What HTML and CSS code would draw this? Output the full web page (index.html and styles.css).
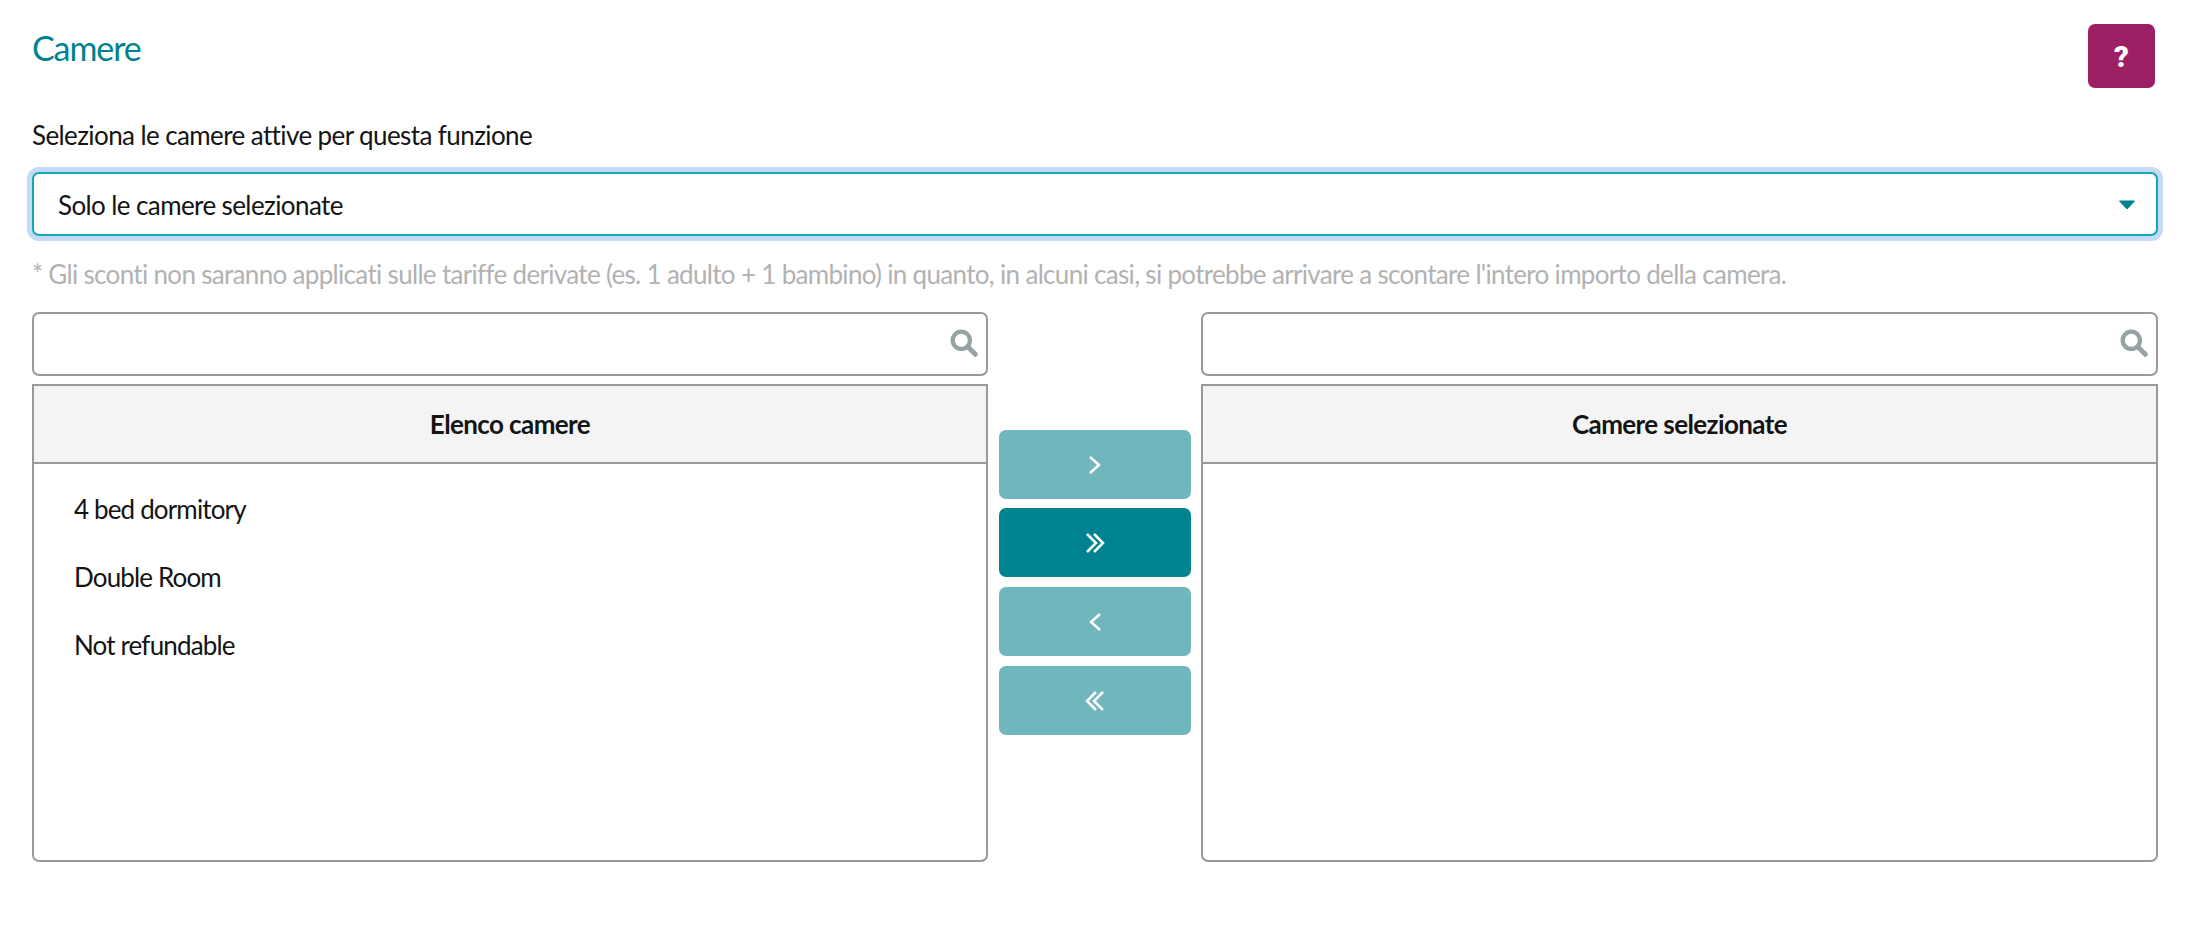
FILE: index.html
```html
<!DOCTYPE html>
<html lang="it">
<head>
<meta charset="utf-8">
<title>Camere</title>
<link rel="stylesheet" href="styles.css">
</head>
<body>
<main class="page">
  <header class="top">
    <h1 class="title">Camere</h1>
    <button class="help" type="button">?</button>
  </header>
  <label class="label">Seleziona le camere attive per questa funzione</label>
  <div class="select">
    <span>Solo le camere selezionate</span>
    <svg class="caret" width="18" height="10" viewBox="0 0 18 10"><path d="M1.500 1h15L9 9z" fill="#008391" stroke="#008391" stroke-linejoin="round"/></svg>
  </div>
  <p class="hint">* Gli sconti non saranno applicati sulle tariffe derivate (es. 1 adulto + 1 bambino) in quanto, in alcuni casi, si potrebbe arrivare a scontare l'intero importo della camera.</p>
  <div class="picker">
    <section class="col">
      <div class="search">
        <input class="search-input" type="text">
        <svg class="search-icon" width="28" height="28" viewBox="0 0 26 26"><circle cx="10.500" cy="10.500" r="8" fill="none" stroke="#95a3a4" stroke-width="4"/><path d="M16.500 16.500l7 7" stroke="#95a3a4" stroke-width="4.500" stroke-linecap="round"/></svg>
      </div>
      <div class="panel">
        <div class="panel-head">Elenco camere</div>
        <ul class="list">
          <li>4 bed dormitory</li>
          <li>Double Room</li>
          <li>Not refundable</li>
        </ul>
      </div>
    </section>
    <div class="actions">
      <button class="move" type="button"><svg width="24" height="24" viewBox="0 0 24 24"><path d="M7 4l9 8-9 8"/></svg></button>
      <button class="move active" type="button"><svg width="24" height="24" viewBox="0 0 24 24"><path d="M4 3l9 9-9 9M11 3l9 9-9 9"/></svg></button>
      <button class="move" type="button"><svg width="24" height="24" viewBox="0 0 24 24"><path d="M17 4l-9 8 9 8"/></svg></button>
      <button class="move" type="button"><svg width="24" height="24" viewBox="0 0 24 24"><path d="M20 3l-9 9 9 9M13 3l-9 9 9 9"/></svg></button>
    </div>
    <section class="col">
      <div class="search">
        <input class="search-input" type="text">
        <svg class="search-icon" width="28" height="28" viewBox="0 0 26 26"><circle cx="10.500" cy="10.500" r="8" fill="none" stroke="#95a3a4" stroke-width="4"/><path d="M16.500 16.500l7 7" stroke="#95a3a4" stroke-width="4.500" stroke-linecap="round"/></svg>
      </div>
      <div class="panel">
        <div class="panel-head">Camere selezionate</div>
        <ul class="list"></ul>
      </div>
    </section>
  </div>
</main>
</body>
</html>
```
FILE: styles.css
```css
* { box-sizing: border-box; }
html, body { margin: 0; background: #fff; }
body {
  font-family: "Lato", "Roboto", sans-serif;
  font-size: 26px;
  letter-spacing: -0.6px;
  color: #141414;
}
.page { padding: 24px 34px 0 32px; }
.top { display: flex; justify-content: space-between; align-items: flex-start; height: 88px; }
.title { margin: 4px 0 0; font-size: 34px; line-height: 40px; font-weight: 400; letter-spacing: -1.1px; color: #00838f; }
.help {
  width: 67px; height: 64px; margin-right: 3px; padding: 2px 0 0; border: 0; border-radius: 7px;
  background: #9c2063; color: #fff; font: 900 29px "Roboto", sans-serif;
}
.label { display: block; margin-top: 8px; margin-bottom: 22px; line-height: 30px; }
.select {
  display: flex; align-items: center; justify-content: space-between;
  height: 64px; padding: 2px 20px 0 24px;
  border: 2px solid #16a7b5; border-radius: 7px; background: #fff;
  box-shadow: 0 0 0 5px #c5daf5;
}
.hint { margin: 23px 0 0; line-height: 30px; letter-spacing: -0.68px; color: #b2b2b2; }
.picker { display: grid; grid-template-columns: 956px 213px 957px; margin-top: 23px; }
.col { display: flex; flex-direction: column; gap: 8px; }
.search { position: relative; }
.search-input {
  display: block; width: 100%; height: 64px; border: 2px solid #999; border-radius: 7px;
  background: #fff;
}
.search-icon { position: absolute; right: 10px; top: 17px; }
.panel { height: 478px; border: 2px solid #999; border-radius: 0 0 7px 7px; }
.panel-head {
  height: 78px; display: flex; align-items: center; justify-content: center;
  background: #f4f4f4; border-bottom: 2px solid #999; font-weight: 700;
}
.list { list-style: none; margin: 11px 0 0; padding: 0 0 0 40px; letter-spacing: -0.85px; }
.list li { height: 68px; line-height: 68px; }
.actions { display: flex; flex-direction: column; align-items: center; gap: 10px; padding-top: 118px; }
.move {
  display: flex; align-items: center; justify-content: center;
  width: 192px; height: 69px; border: 0; border-radius: 7px; background: #70b6bc;
}
.move.active { margin-top: -1px; background: #008391; }
.move svg path { fill: none; stroke: #fff; stroke-width: 2.500; }
```
